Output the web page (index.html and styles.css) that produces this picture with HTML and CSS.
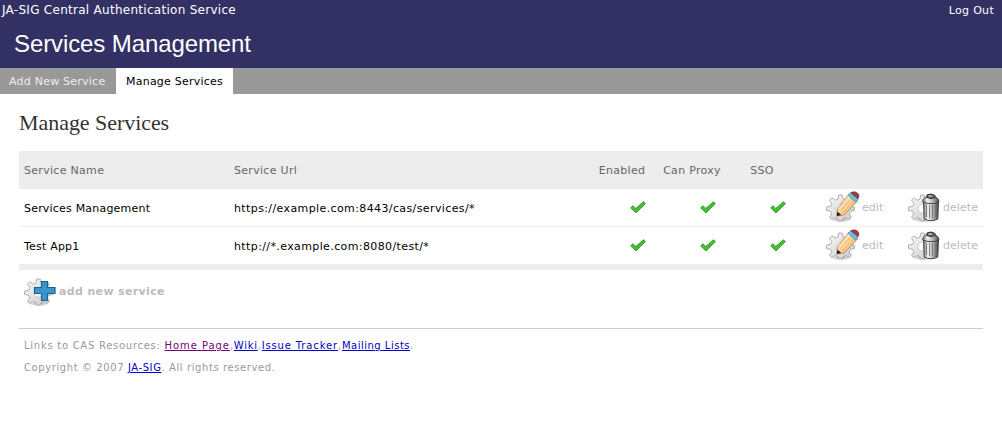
FILE: index.html
```html
<!DOCTYPE html>
<html lang="en">
<head>
<meta charset="utf-8">
<title>Services Management</title>
<link rel="stylesheet" href="styles.css">
</head>
<body>
<svg class="defs" width="0" height="0" aria-hidden="true">
  <defs>
    <linearGradient id="metal" x1="0" y1="0" x2="1" y2="1"><stop offset="0" stop-color="#fafafa"/><stop offset="1" stop-color="#c8c8c8"/></linearGradient>
    <linearGradient id="wood" x1="0" y1="0" x2="1" y2="1"><stop offset="0.2" stop-color="#fff0cc"/><stop offset="0.8" stop-color="#f5b566"/></linearGradient>
    <linearGradient id="can" x1="0" y1="0" x2="1" y2="0"><stop offset="0" stop-color="#777"/><stop offset="0.3" stop-color="#f4f4f4"/><stop offset="0.65" stop-color="#aaa"/><stop offset="1" stop-color="#444"/></linearGradient>
    <radialGradient id="shade"><stop offset="0" stop-color="#777" stop-opacity="0.8"/><stop offset="1" stop-color="#999" stop-opacity="0"/></radialGradient>
    <symbol id="gear" viewBox="0 0 32 32">
      <ellipse cx="15" cy="28.500" rx="11" ry="3" fill="url(#shade)"/>
      <path d="M12.800 4h3.400l.8 4 2.800 1.200 3.300-2.400 2.400 2.400-2.300 3.400 1.100 2.700 4.200.8v3.400l-4.200.8-1.100 2.700 2.300 3.300-2.400 2.200-3.300-2.100-2.800 1.200-.8 2.400h-3.400l-.8-2.400-2.800-1.200-3.300 2.100-2.400-2.200 2.300-3.300-1.100-2.700-4.200-.8v-3.400l4.200-.8 1.100-2.700-2.300-3.400 2.400-2.400 3.300 2.400 2.800-1.200z" fill="url(#metal)" stroke="#b0b0b0" stroke-width="1"/>
      <circle cx="14.500" cy="17.500" r="4.500" fill="#fff" stroke="#c4c4c4" stroke-width="0.800"/>
    </symbol>
    <symbol id="pencil-gear" viewBox="0 0 34 32">
      <use href="#gear" width="32" height="32"/>
      <path d="M11.500 17.500 23 3 31.500 10 18 24 10.800 25z" fill="url(#wood)" stroke="#b87d45" stroke-width="0.800"/>
      <path d="M14.500 19.500 26 6.500M17 21.500 29 8.500" stroke="#e0a561" stroke-width="0.600" fill="none"/>
      <path d="M11.400 20.500 10.800 25 15.200 24z" fill="#171733"/>
      <path d="M22.300 4.200 25 1.400 32.200 7.800 29.600 11.200z" fill="#66c4e8" stroke="#327f9e" stroke-width="0.700"/>
      <path d="M24.800 1.800Q27 .4 29.500 1 33 2.300 33 5.500L31.900 7.800z" fill="#a73a40" stroke="#722b38" stroke-width="0.600"/>
    </symbol>
    <symbol id="trash-gear" viewBox="0 0 32 32">
      <use href="#gear" width="32" height="32"/>
      <path d="M15.500 10h15l-.7 18q-7 3.500-13.600 0z" fill="url(#can)" stroke="#444" stroke-width="1"/>
      <path d="M18.500 14v12M21.500 14v13M24.500 14v13M27.500 14v12" stroke="#777" stroke-width="0.900"/>
      <path d="M14.700 11q0-5.500 8-6 8 .5 8.300 6-8 3.300-16.300 0z" fill="url(#can)" stroke="#444" stroke-width="1"/>
      <path d="M19 6.500v-2.500l4-1 4 1.500v2l-4 1z" fill="#777" stroke="#222" stroke-width="1"/>
      <path d="M20.500 5h3" stroke="#ddd" stroke-width="1"/>
    </symbol>
    <symbol id="plus-gear" viewBox="0 0 32 32">
      <use href="#gear" width="32" height="32"/>
      <path d="M17.500 6.500h6v6h7.500v6h-7.500v7h-6v-7h-7v-6h7z" fill="#3996cd" stroke="#20618f" stroke-width="1.200"/>
    </symbol>
    <symbol id="check" viewBox="0 0 16 13">
      <path d="M.7 6.800 3 4.700 5.700 7.400 13.500.7 15.400 2.700 5.900 12z" fill="#3fc22d" stroke="#2a8a22" stroke-width="0.800"/>
    </symbol>
  </defs>
</svg>
<header class="banner">
  <div class="topline"><span class="org">JA-SIG Central Authentication Service</span><a class="logout">Log Out</a></div>
  <h1 class="title"><span>Services Management</span></h1>
</header>
<nav class="tabs"><a class="tab">Add New Service</a><a class="tab current">Manage Services</a></nav>
<main class="content">
  <h2 class="heading"><span>Manage Services</span></h2>
  <table class="services">
    <colgroup><col class="c-name"><col class="c-url"><col class="c-flag"><col class="c-flag"><col class="c-flag"><col class="c-edit"><col></colgroup>
    <thead><tr><th>Service Name</th><th>Service Url</th><th class="mid">Enabled</th><th class="mid">Can Proxy</th><th class="mid">SSO</th><th></th><th></th></tr></thead>
    <tbody>
      <tr><td class="name">Services Management</td><td class="url">https://example.com:8443/cas/services/*</td>
        <td class="flag"><svg><use href="#check"/></svg></td><td class="flag"><svg><use href="#check"/></svg></td><td class="flag"><svg><use href="#check"/></svg></td>
        <td class="edit"><a class="action"><svg class="pencil"><use href="#pencil-gear"/></svg><span>edit</span></a></td><td class="delete"><a class="action"><svg><use href="#trash-gear"/></svg><span>delete</span></a></td></tr>
      <tr><td class="name">Test App1</td><td class="url">http://*.example.com:8080/test/*</td>
        <td class="flag"><svg><use href="#check"/></svg></td><td class="flag"><svg><use href="#check"/></svg></td><td class="flag"><svg><use href="#check"/></svg></td>
        <td class="edit"><a class="action"><svg class="pencil"><use href="#pencil-gear"/></svg><span>edit</span></a></td><td class="delete"><a class="action"><svg><use href="#trash-gear"/></svg><span>delete</span></a></td></tr>
    </tbody>
  </table>
  <a class="add"><svg><use href="#plus-gear"/></svg><span>add new service</span></a>
  <footer class="footer">
    <p class="links"><span>Links to CAS Resources: </span><a class="visited">Home Page</a>,<a>Wiki</a>,<a class="tracker">Issue Tracker</a>,<a class="lists">Mailing Lists</a>.</p>
    <p class="copy">Copyright © 2007 <a>JA-SIG</a>. All rights reserved.</p>
  </footer>
</main>
</body>
</html>
```
FILE: styles.css
```css
body { margin: 0; background: #fff; color: #000; font: 11px/16px "DejaVu Sans", sans-serif; white-space: nowrap; }
.defs { display: block; height: 0; }
.banner { height: 68px; background: #333164; color: #fff; }
.topline { display: flex; justify-content: space-between; height: 20px; line-height: 20px; padding: 0 8px 0 2px; }
.org { font-size: 12px; letter-spacing: 0.28px; }
.logout { line-height: 21px; letter-spacing: 0.3px; }
.title { margin: 0; padding: 10px 0 0 14px; font: 24px/28px "Liberation Sans", Arial, sans-serif; letter-spacing: -0.1px; }
.tabs { display: flex; height: 26px; background: #999; line-height: 27px; letter-spacing: 0.23px; }
.tab { box-sizing: border-box; width: 116px; height: 26px; padding-left: 9px; color: #eee; }
.tab.current { width: 117px; padding-left: 10px; background: #fff; color: #000; }
.content { padding: 0 19px; }
.heading { margin: 0; padding-top: 14px; height: 43px; font: 22px/30px "Liberation Serif", "Times New Roman", serif; letter-spacing: -0.05px; color: #333; }
.services { width: 964px; table-layout: fixed; border-collapse: separate; border-spacing: 0; border-bottom: 6px solid #ededed; }
.c-name { width: 210px; }
.c-url { width: 358px; }
.c-flag { width: 70px; }
.c-edit { width: 106px; }
.services th { box-sizing: border-box; height: 38px; padding: 2px 0 0 5px; background: #ededed; color: #666; font-weight: normal; text-align: left; letter-spacing: 0.3px; }
.services th.mid { padding: 2px 0 0; text-align: center; }
.services td { box-sizing: border-box; height: 37px; padding: 0 0 0 5px; letter-spacing: 0.2px; }
.services td.name, .services td.url { padding-top: 3px; }
.services td.url { letter-spacing: 0.39px; }
.services tbody tr:first-child td { height: 38px; border-bottom: 1px solid #ededed; }
.services td.flag { padding-left: 43px; }
.flag svg { display: block; width: 16px; height: 13px; }
.services td.edit { padding-left: 29px; }
.action { display: flex; align-items: center; color: #bbb; letter-spacing: 0.05px; }
.action svg { width: 32px; height: 32px; margin: -2px 3px 0 0; }
.action svg.pencil { width: 34px; margin-right: 2px; }
.add { display: flex; align-items: center; height: 42px; padding-left: 5px; color: #bbb; font-weight: bold; letter-spacing: 0.35px; }
.add span { padding-top: 2px; }
.add svg { width: 32px; height: 32px; margin-right: 3px; }
.footer { margin-top: 16px; border-top: 1px solid #ccc; padding: 6px 5px 0; color: #999; font-size: 10px; letter-spacing: 0.73px; }
.footer p { margin: 0; height: 22px; line-height: 22px; }
.copy { letter-spacing: 0.59px; }
.footer a { color: #00c; text-decoration: underline; }
.footer a.visited { color: #707; letter-spacing: 0.93px; }
.footer a.tracker { letter-spacing: 0.86px; }
.footer a.lists { letter-spacing: 0.5px; }
```
